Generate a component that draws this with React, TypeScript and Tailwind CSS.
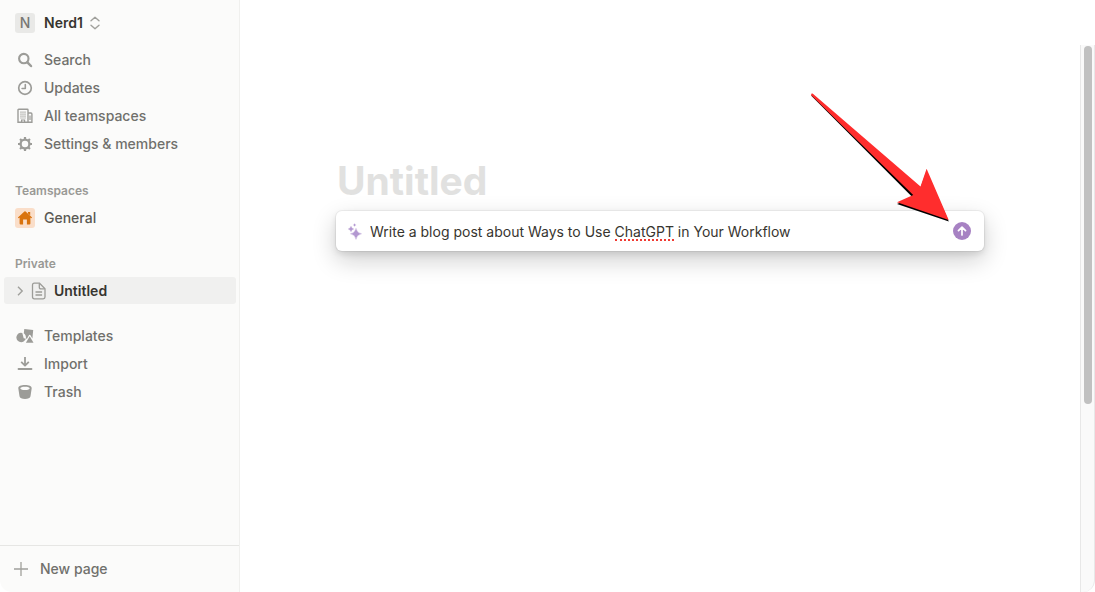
import { useState } from 'react';
import type { ReactNode } from 'react';

type Item = {
  label: string;
  icon: ReactNode;
};

const SearchIcon = () => (
  <svg viewBox="0 0 16 16" className="size-4" fill="none" stroke="currentColor" strokeLinecap="round">
    <circle cx="6.8" cy="6.6" r="4.7" strokeWidth="2.1" />
    <path d="M10.4 10.3 14 14" strokeWidth="2.5" />
  </svg>
);

const ClockIcon = () => (
  <svg viewBox="0 0 16 16" className="size-4" fill="none" stroke="currentColor">
    <circle cx="8" cy="8" r="6.3" strokeWidth="1.7" />
    <path d="M8.3 4.5v4H5.1" strokeWidth="1.6" strokeLinecap="round" strokeLinejoin="round" />
  </svg>
);

const BuildingIcon = () => (
  <svg viewBox="0 0 16 16" className="size-4" fill="none" stroke="currentColor" strokeWidth="1.4">
    <path d="M11 14.3H1V1.900q0-.7.7-.7h8.600q.7 0 .7.700zM11 5h3q.9 0 .9.900v8.400H11" />
    <path d="M4 3.500v7M6 3.500v7M8 3.500v7" strokeDasharray="1.2 .8" strokeWidth="1.2" />
    <path d="M4.600 14v-2h3v2M13 7.500v4.500" strokeWidth="1.200" />
  </svg>
);

const GearIcon = () => (
  <svg viewBox="0 0 16 16" className="size-4" fill="none" stroke="currentColor">
    <circle cx="8" cy="8" r="4.4" strokeWidth="2.3" />
    <path
      d="M8 1v2.400M8 12.600V15M1 8h2.400M12.600 8H15M3.050 3.050l1.700 1.700M11.250 11.250l1.700 1.700M12.950 3.050l-1.700 1.700M4.750 11.250l-1.700 1.700"
      strokeWidth="2.2"
    />
  </svg>
);

const TemplatesIcon = () => (
  <svg viewBox="0 0 18 16" className="h-4 w-[18px]" fill="currentColor">
    <path d="M8.300 1 17.200 1.900 16.400 10.400 14.300 7.100q-.6-.8-1.200 0L11 10.700 10 10.500C10 7.900 9.400 6.300 7.800 5.200z" />
    <path d="M6.300 4.900A4.700 4.700 0 1 0 8.900 12.300L10 10.700 7.700 10.200z" />
    <path d="M13.700 8.300 17.500 14.800H9.900z" />
  </svg>
);

const ImportIcon = () => (
  <svg viewBox="0 0 16 16" className="size-4" fill="none" stroke="currentColor" strokeWidth="1.8">
    <path d="M8 .9v8.400M4.200 5.900 8 9.600 11.800 5.900" strokeLinejoin="round" />
    <path d="M1.500 13h13" strokeLinecap="round" />
  </svg>
);

const TrashIcon = () => (
  <svg viewBox="0 0 16 16" className="size-4" fill="currentColor" fillRule="evenodd">
    <path d="M8 1C4 1 1.300 2.200 1.300 4.200l1.200 8.100C2.800 14.200 5 15 8 15s5.200-.8 5.500-2.700l1.200-8.100C14.700 2.200 12 1 8 1zm0 1.700c3 0 4.700.7 4.700 1.600s-1.700 1.800-4.700 1.800-4.700-.9-4.700-1.800 1.700-1.600 4.700-1.600z" />
  </svg>
);

const HomeIcon = () => (
  <svg viewBox="0 0 16 16" className="size-4" fill="currentColor">
    <path d="M7.400 1.600q.6-.5 1.200 0l6.200 5.700q.4.400 0 .8-.4.300-.8 0l-.6-.5v5.800q0 1-1 1H9.900V9.500H6.100v4.900H3.600q-1 0-1-1V7.600l-.6.5q-.4.300-.8 0-.4-.400 0-.8z" />
    <path d="M11 2h2.200v3.600L11 3.500z" />
  </svg>
);

const PageIcon = () => (
  <svg viewBox="0 0 16 18" className="h-[18px] w-4" fill="none" stroke="currentColor" strokeWidth="1.3">
    <path d="M3.300 1.200h5.200l5.500 5.500v8.300q0 1.800-1.800 1.800H3.300q-1.800 0-1.800-1.800V3q0-1.800 1.800-1.800z" />
    <path d="M8.300 1.500v3.700q0 1.700 1.700 1.700h3.700M4.500 10h6.600M4.500 13h6.600" />
  </svg>
);

const SparkleIcon = () => (
  <svg viewBox="0 0 16 18" className="h-[18px] w-4 shrink-0 text-[#b398d1]" fill="currentColor">
    <path d="M9 6.200q.8 4.800 5.600 5.600-4.800.8-5.600 5.600-.8-4.800-5.600-5.600 4.800-.8 5.600-5.600z" stroke="currentColor" strokeWidth=".3" />
    <path d="M4 4.200q.5 2.300 2.800 2.800-2.300.5-2.800 2.800-.5-2.300-2.800-2.800 2.300-.5 2.800-2.800z" stroke="currentColor" strokeWidth=".3" />
    <path d="M7.600 1.200q.3 1.500 1.800 1.800-1.500.3-1.800 1.800-.3-1.500-1.800-1.800 1.500-.3 1.800-1.800z" />
  </svg>
);

const mainItems: Item[] = [
  { label: 'Search', icon: <SearchIcon /> },
  { label: 'Updates', icon: <ClockIcon /> },
  { label: 'All teamspaces', icon: <BuildingIcon /> },
  { label: 'Settings & members', icon: <GearIcon /> },
];

const bottomItems: Item[] = [
  { label: 'Templates', icon: <TemplatesIcon /> },
  { label: 'Import', icon: <ImportIcon /> },
  { label: 'Trash', icon: <TrashIcon /> },
];

function SidebarItem({ label, icon }: Item) {
  return (
    <li>
      <button type="button" className="flex h-7 w-full items-center gap-[9px] pr-3 pl-[15px] text-left">
        <span className="flex w-5 shrink-0 justify-center text-[#9c9c98]">{icon}</span>
        <span>{label}</span>
      </button>
    </li>
  );
}

function Sidebar() {
  return (
    <aside className="flex w-60 shrink-0 flex-col rounded-bl-xl border-r border-[#f0f0ee] bg-[#fbfbfa] text-sm font-medium text-[#70706c]">
      <button type="button" className="flex h-[46px] items-center gap-[9px] pl-[15px] text-left">
        <span className="flex size-5 items-center justify-center rounded-[3px] bg-[#e9e9e7] text-[#787774]">N</span>
        <span className="font-semibold text-[#37352f]">Nerd1</span>
        <svg viewBox="0 0 10 14" className="-ml-0.5 h-3.5 w-2.5" fill="none" stroke="#a0a09c" strokeWidth="1.4" strokeLinecap="round" strokeLinejoin="round">
          <path d="M1 4.700l4-3.500 4 3.500M1 9.300l4 3.500 4-3.500" />
        </svg>
      </button>

      <nav className="flex-1">
        <ul>
          {mainItems.map((item) => (
            <SidebarItem key={item.label} {...item} />
          ))}
        </ul>

        <h2 className="mt-[25px] px-[15px] text-xs leading-4 font-semibold text-[#999995]">Teamspaces</h2>
        <button type="button" className="mt-[5px] flex h-7 w-full items-center gap-[9px] pl-[15px] text-left text-[#5a5954]">
          <span className="flex size-5 items-center justify-center rounded-[3px] bg-[#fadec9] text-[#d9730d]">
            <HomeIcon />
          </span>
          General
        </button>

        <h2 className="mt-6 px-[15px] text-xs leading-4 font-semibold text-[#999995]">Private</h2>
        <button
          type="button"
          className="mx-1 mt-[5px] flex h-[27px] w-[calc(100%-7px)] items-center rounded-[3px] bg-[#f0f0ef] pl-3 text-left font-semibold text-[#37352f]"
        >
          <svg viewBox="0 0 8 10" className="mr-[7px] h-2.5 w-2" fill="none" stroke="#a0a09c" strokeWidth="1.4">
            <path d="M2 .8 6.200 5 2 9.200" />
          </svg>
          <span className="mr-[7px] text-[#9c9c98]">
            <PageIcon />
          </span>
          Untitled
        </button>

        <ul className="mt-[18px]">
          {bottomItems.map((item) => (
            <SidebarItem key={item.label} {...item} />
          ))}
        </ul>
      </nav>

      <button type="button" className="flex h-[47px] items-center gap-3 border-t border-[#e6e6e4] pl-3.5 text-left">
        <svg viewBox="0 0 14 14" className="size-3.5" fill="none" stroke="#a0a09c" strokeWidth="1.3">
          <path d="M7 0v14M0 7h14" />
        </svg>
        New page
      </button>
    </aside>
  );
}

function PromptBox() {
  const [prompt, setPrompt] = useState('Write a blog post about Ways to Use ChatGPT in Your Workflow');

  return (
    <form
      onSubmit={(e) => e.preventDefault()}
      className="relative flex h-10 items-center rounded-md bg-white pr-[13px] pl-[11px] shadow-[0_0_0_1px_rgba(15,15,15,0.05),0_3px_6px_rgba(15,15,15,0.1),0_9px_24px_rgba(15,15,15,0.2)]"
    >
      <SparkleIcon />
      <div className="relative ml-[7px] flex-1 pt-px">
        <input
          type="text"
          aria-label="Ask AI to write"
          spellCheck={false}
          value={prompt}
          onChange={(e) => setPrompt(e.target.value)}
          className="block w-full text-sm text-[#37352f] outline-none"
        />
        {/* Spelling mark under "ChatGPT" */}
        <span className="absolute top-[18px] left-[245px] w-[59px] border-b-2 border-dotted border-[#f03a32]" />
      </div>
      <button type="submit" aria-label="Submit" className="flex size-[18px] items-center justify-center rounded-full bg-[#a782c3] text-white">
        <svg viewBox="0 0 10 10" className="size-2.5" fill="none" stroke="currentColor" strokeWidth="1.7" strokeLinecap="round" strokeLinejoin="round">
          <path d="M5 9V1.300M1.500 4.700 5 1.200l3.500 3.500" />
        </svg>
      </button>

      {/* Arrow pointing at the submit button */}
      <svg viewBox="0 0 140 130" className="pointer-events-none absolute right-[34px] bottom-7 h-[130px] w-[140px]">
        <path d="M1 2.600 2.500 2 110.500 95 116.500 78 138.800 128.500 87 111 102.500 104.300z" fill="#000" />
        <path d="M1.200.8 2.600.6 110.500 93.500 116.600 75.800 138.700 127 87 109.300 103.200 102 1.200 2.200z" fill="#ff2d2d" />
      </svg>
    </form>
  );
}

export default function App() {
  return (
    <div className="flex min-h-screen bg-white font-[Inter,'Liberation_Sans',sans-serif]">
      <Sidebar />

      <div className="flex min-w-0 flex-1 flex-col pt-[45px]">
        <div className="flex flex-1">
          <main className="flex-1 px-24 pt-28">
            <h1 className="mb-1.5 pl-px text-[39px] leading-12 font-bold text-[#e1e1e0]">Untitled</h1>
            <PromptBox />
          </main>

          {/* Scrollbar track */}
          <div className="w-[15px] shrink-0 rounded-br-xl border-x border-[#e8e8e8] bg-[#fafafa] pt-px">
            <div className="mx-auto h-[358px] w-2 rounded-full bg-[#c1c1c1]" />
          </div>
        </div>
      </div>
    </div>
  );
}
